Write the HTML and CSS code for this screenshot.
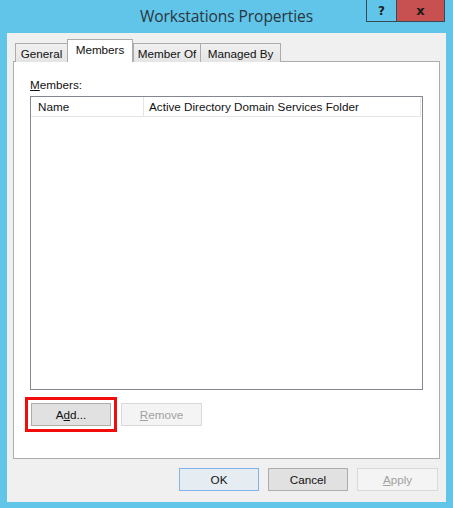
FILE: index.html
```html
<!DOCTYPE html>
<html>
<head>
<meta charset="utf-8">
<link rel="stylesheet" href="styles.css">
</head>
<body>
<div class="window">
  <div class="titlebar">
    <div class="spacer"></div>
    <div class="title">Workstations Properties</div>
    <div class="controls">
      <div class="ctl help">?</div>
      <div class="ctl close">x</div>
    </div>
  </div>
  <div class="client">
    <div class="tabs">
      <div class="tab t-general">General</div>
      <div class="tab t-members selected">Members</div>
      <div class="tab t-memberof">Member Of</div>
      <div class="tab t-managed">Managed By</div>
    </div>
    <div class="panel">
      <div class="label"><u>M</u>embers:</div>
      <div class="listview">
        <div class="header">
          <div class="col col-name">Name</div>
          <div class="col col-folder">Active Directory Domain Services Folder</div>
        </div>
      </div>
      <div class="panel-buttons">
        <div class="btn add">A<u>d</u>d...</div>
        <div class="btn disabled"><u>R</u>emove</div>
      </div>
    </div>
    <div class="dialog-buttons">
      <div class="btn default">OK</div>
      <div class="btn">Cancel</div>
      <div class="btn disabled"><u>A</u>pply</div>
    </div>
  </div>
</div>
</body>
</html>
```

FILE: styles.css
```css
html, body {
  margin: 0;
  padding: 0;
}
body {
  width: 453px;
  height: 508px;
  overflow: hidden;
  background: #60c5e8;
  font-family: "Liberation Sans", Arial, sans-serif;
  font-size: 11.7px;
  color: #000;
}
.window {
  width: 453px;
  height: 508px;
  display: flex;
  flex-direction: column;
}
.titlebar {
  height: 33px;
  display: grid;
  grid-template-columns: 1fr auto 1fr;
  align-items: start;
}
.title {
  font-family: "Open Sans", "Noto Sans", sans-serif;
  font-size: 15.6px;
  color: #2a3540;
  line-height: 32px;
  letter-spacing: -0.1px;
}
.controls {
  justify-self: end;
  display: flex;
  margin-right: 8px;
}
.ctl {
  height: 22px;
  box-sizing: border-box;
  display: flex;
  align-items: center;
  justify-content: center;
  font-family: "DejaVu Sans", sans-serif;
  font-weight: bold;
  font-size: 12px;
  color: #1b1b1b;
}
.help {
  width: 31px;
  border: 1px solid #3a4a55;
  border-top: none;
  background: #60c5e8;
}
.close {
  width: 48px;
  background: #c75050;
  border: 1px solid #3a4a55;
  border-left: none;
  border-top: none;
  font-size: 13px;
}
.client {
  flex: 1;
  margin: 0 7px 6px 7px;
  background: #f0f0f0;
  padding: 7px 6px 0 6px;
  display: flex;
  flex-direction: column;
}
.tabs {
  display: flex;
  align-items: flex-end;
  height: 22px;
  padding-left: 2px;
  position: relative;
  z-index: 1;
  margin-bottom: -1px;
}
.tab {
  box-sizing: border-box;
  height: 19px;
  border: 1px solid #acacac;
  border-bottom: none;
  background: linear-gradient(#f0f0f0, #e5e5e5);
  text-align: center;
  line-height: 20px;
  color: #111;
}
.t-general { width: 53px; }
.t-members { width: 66px; margin-left: -1px; }
.t-memberof { width: 68px; }
.t-managed { width: 81px; margin-left: -1px; }
.tab.selected {
  height: 23px;
  background: #fff;
  line-height: 19px;
  position: relative;
  z-index: 2;
}
.panel {
  box-sizing: border-box;
  height: 398px;
  background: #fff;
  border: 1px solid #acacac;
  padding: 15px 16px 0 16px;
  display: flex;
  flex-direction: column;
}
.label {
  line-height: 15px;
  height: 15px;
  margin-bottom: 4px;
  color: #111;
}
.listview {
  box-sizing: border-box;
  height: 294px;
  border: 1px solid #828790;
  background: #fff;
}
.header {
  display: flex;
  height: 20px;
  border-bottom: 1px solid #e5e5e5;
  box-sizing: border-box;
  margin-right: 1px;
}
.col {
  line-height: 19px;
  padding-left: 7px;
  color: #111;
}
.col-name {
  width: 105px;
  border-right: 1px solid #e5e5e5;
}
.col-folder {
  flex: 1;
  padding-left: 5px;
  border-right: 1px solid #e5e5e5;
}
.panel-buttons {
  display: flex;
  gap: 10px;
  margin-top: 13px;
  padding-left: 1px;
}
.btn {
  box-sizing: border-box;
  width: 80px;
  height: 23px;
  border: 1px solid #adadad;
  background: #e1e1e1;
  text-align: center;
  line-height: 21px;
  color: #111;
}
.btn.add {
  outline: 3px solid #f20d0d;
  outline-offset: 3px;
}
.btn.disabled {
  background: #f4f4f4;
  border-color: #d9d9d9;
  color: #a2a2a2;
  width: 81px;
}
.btn.default {
  border-color: #7eb4ea;
  background: #e5ecf2;
}
.dialog-buttons {
  display: flex;
  justify-content: flex-end;
  gap: 9px;
  margin-top: 9px;
  padding-right: 2px;
}
.dialog-buttons .btn {
  height: 23px;
}
```
